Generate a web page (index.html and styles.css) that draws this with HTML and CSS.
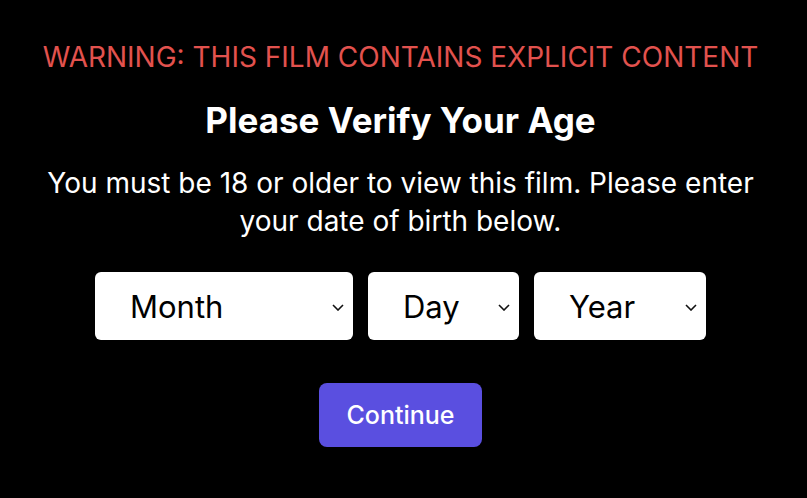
FILE: index.html
```html
<!DOCTYPE html>
<html lang="en">
<head>
<meta charset="utf-8">
<title>Age Verification</title>
<link rel="stylesheet" href="styles.css">
</head>
<body>
<div class="gate">
  <p class="warning">WARNING: THIS FILM CONTAINS EXPLICIT CONTENT</p>
  <h1>Please Verify Your Age</h1>
  <p class="intro">You must be 18 or older to view this film. Please enter your date of birth below.</p>
  <form class="dob">
    <div class="fields">
      <div class="pick month">
        <select>
          <option>Month</option>
          <option>January</option><option>February</option><option>March</option>
          <option>April</option><option>May</option><option>June</option>
          <option>July</option><option>August</option><option>September</option>
          <option>October</option><option>November</option><option>December</option>
        </select>
        <svg class="chev" width="12" height="7" viewBox="0 0 12 7"><path d="M1 1l5 5 5-5" fill="none" stroke="#111" stroke-width="1.6"/></svg>
      </div>
      <div class="pick day">
        <select>
          <option>Day</option>
        </select>
        <svg class="chev" width="12" height="7" viewBox="0 0 12 7"><path d="M1 1l5 5 5-5" fill="none" stroke="#111" stroke-width="1.6"/></svg>
      </div>
      <div class="pick year">
        <select>
          <option>Year</option>
        </select>
        <svg class="chev" width="12" height="7" viewBox="0 0 12 7"><path d="M1 1l5 5 5-5" fill="none" stroke="#111" stroke-width="1.6"/></svg>
      </div>
    </div>
    <button type="button" class="continue">Continue</button>
  </form>
</div>
</body>
</html>
```

FILE: styles.css
```css
html, body { margin: 0; background: #000; }
body { font-family: Inter, "Noto Sans", sans-serif; color: #fff; padding-right: 6px; }
.gate { width: 760px; margin: 0 auto; padding-top: 40px; text-align: center; }
.warning { margin: 0; color: #e2524e; font-size: 28px; line-height: 34px; }
h1 { margin: 25px 0 0; font-size: 35px; font-weight: 700; line-height: 42px; }
.intro { margin: 23px auto 0; width: 720px; font-size: 28px; line-height: 38px; }
.fields { display: flex; justify-content: center; gap: 15px; margin-top: 32px; }
.pick { position: relative; height: 68px; }
.pick select { width: 100%; height: 100%; border: none; border-radius: 6px; background: #fff; color: #000; font-family: Inter, sans-serif; font-size: 31px; padding: 0 30px 0 35px; -webkit-appearance: none; appearance: none; }
.chev { position: absolute; right: 9px; top: 32px; pointer-events: none; }
.month { width: 258px; }
.day { width: 151px; }
.year { width: 172px; }
.continue { margin-top: 43px; width: 163px; height: 64px; border: none; border-radius: 8px; background: #5a4fe0; color: #fff; font-family: Inter, sans-serif; font-size: 25px; font-weight: 500; }
```
